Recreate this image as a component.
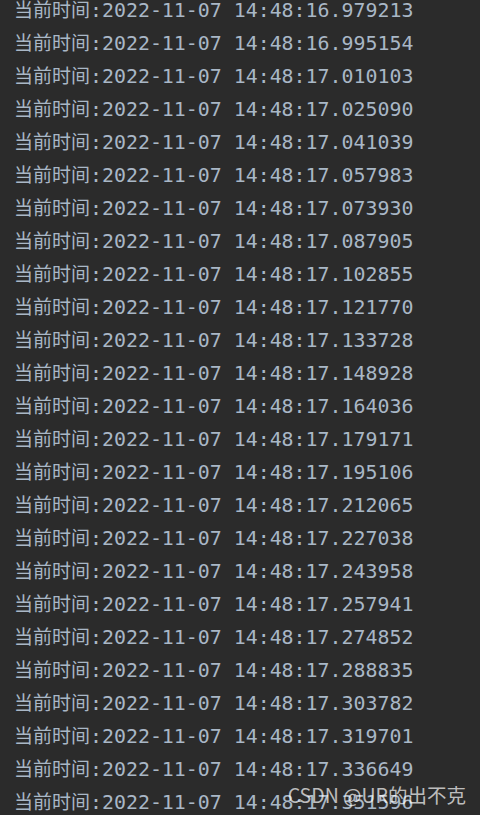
import React from "react";

const times = [
  "16.979213", "16.995154", "17.010103", "17.025090", "17.041039",
  "17.057983", "17.073930", "17.087905", "17.102855", "17.121770",
  "17.133728", "17.148928", "17.164036", "17.179171", "17.195106",
  "17.212065", "17.227038", "17.243958", "17.257941", "17.274852",
  "17.288835", "17.303782", "17.319701", "17.336649", "17.351596",
];

export default function App() {
  return (
    <div className="relative w-[480px] h-[815px] overflow-hidden bg-[#2b2b2b]">
      <div className="mt-[-8px] pl-[14px]">
        {times.map((t) => (
          <div key={t} className="h-[33px] leading-[33px] whitespace-nowrap text-[20px] text-[#a9b7c6]">
            <span className="font-['Noto_Sans_CJK_SC',sans-serif] text-[19px]">当前时间</span>
            <span className="font-['DejaVu_Sans_Mono','Liberation_Mono',monospace] text-[19.9px]">
              :2022-11-07 14:48:{t}
            </span>
          </div>
        ))}
      </div>
      <div className="absolute right-[14px] bottom-[7px] leading-[26px] text-[19.5px] text-white/70 font-['Noto_Sans_CJK_SC',sans-serif]">
        CSDN @UR的出不克
      </div>
    </div>
  );
}
